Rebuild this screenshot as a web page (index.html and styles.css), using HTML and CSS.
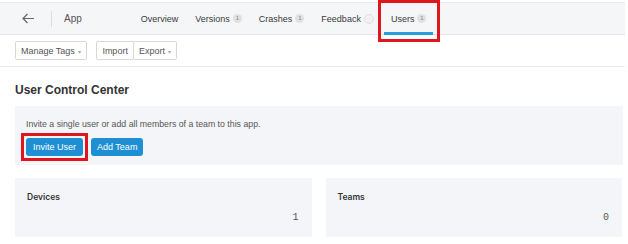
FILE: index.html
```html
<!DOCTYPE html>
<html lang="en">
<head>
    <meta charset="UTF-8">
    <title>App - Users</title>
    <link rel="stylesheet" href="styles.css">
</head>
<body>
    <div class="page">
        <header class="topbar">
            <a class="back" href="#">
                <svg width="13" height="11" viewBox="0 0 13 11"><path d="M12 5.5H1.5M5.5 1L1 5.5L5.5 10" fill="none" stroke="#666" stroke-width="1.2"/></svg>
            </a>
            <span class="sep"></span>
            <span class="app-name">App</span>
            <nav class="tabs">
                <a class="tab" href="#">Overview</a>
                <a class="tab" href="#">Versions <span class="badge">1</span></a>
                <a class="tab" href="#">Crashes <span class="badge">1</span></a>
                <a class="tab" href="#">Feedback <span class="badge empty"></span></a>
                <a class="tab active" href="#">Users <span class="badge">1</span><span class="mark"></span></a>
            </nav>
        </header>

        <div class="toolbar">
            <button class="tool">Manage Tags <span class="caret">&#9662;</span></button>
            <div class="tool-group">
                <button class="tool">Import</button>
                <button class="tool">Export <span class="caret">&#9662;</span></button>
            </div>
        </div>

        <h2 class="title">User Control Center</h2>

        <div class="invite-panel">
            <p>Invite a single user or add all members of a team to this app.</p>
            <div class="actions">
                <button class="btn marked">Invite User</button>
                <button class="btn">Add Team</button>
            </div>
        </div>

        <div class="stats">
            <div class="stat">
                <div class="stat-label">Devices</div>
                <div class="stat-value">1</div>
            </div>
            <div class="stat">
                <div class="stat-label">Teams</div>
                <div class="stat-value">0</div>
            </div>
        </div>
    </div>
</body>
</html>
```

FILE: styles.css
```css
:root {
    --bar: #f5f6f8;
    --panel: #f4f5f9;
    --line: #e3e4e7;
    --text: #444;
    --blue: #1f8fd3;
    --red: #e0161f;
}

body {
    margin: 0;
    background: #fff;
    font-family: 'Liberation Sans', Arial, sans-serif;
    color: var(--text);
}

.page {
    width: 625px;
    padding-top: 2px;
}

.topbar {
    display: flex;
    align-items: center;
    height: 31px;
    background: var(--bar);
    border-top: 1px solid #ebebeb;
    border-bottom: 1px solid var(--line);
}

.back {
    display: flex;
    margin-left: 22px;
}

.sep {
    width: 1px;
    height: 16px;
    background: #dcdcdc;
    margin-left: 16px;
}

.app-name {
    margin-left: 12px;
    font-size: 10px;
    color: #555;
}

.tabs {
    display: flex;
    height: 100%;
    margin-left: 52px;
    gap: 3px;
}

.tab {
    position: relative;
    display: flex;
    align-items: center;
    padding: 0 7px;
    font-size: 9px;
    color: #3a3a3a;
    text-decoration: none;
}

.badge {
    display: inline-block;
    width: 9px;
    height: 9px;
    margin-left: 3px;
    border-radius: 50%;
    background: #e1e1e1;
    color: #888;
    font-size: 6px;
    line-height: 9px;
    text-align: center;
}

.badge.empty {
    background: #f1f1f1;
    border: 1px solid #e0e0e0;
    width: 8px;
    height: 8px;
}

.tab.active .mark {
    position: absolute;
    left: 0;
    right: 0;
    bottom: -1px;
    height: 3px;
    background: #2a9fd6;
}

.tab.active::after {
    content: '';
    position: absolute;
    left: -6px;
    right: -7px;
    top: -3px;
    bottom: -8px;
    border: 3px solid var(--red);
}

.toolbar {
    display: flex;
    align-items: center;
    gap: 9px;
    height: 31px;
    padding-left: 15px;
    border-bottom: 1px solid #ebebeb;
}

.tool {
    height: 19px;
    padding: 0 5px;
    background: #fff;
    border: 1px solid #d8d8d8;
    border-radius: 2px;
    font-family: inherit;
    font-size: 9px;
    color: #555;
}

.tool-group {
    display: flex;
}

.tool-group .tool + .tool {
    margin-left: -1px;
}

.caret {
    margin-left: 1px;
    font-size: 6px;
    color: #aaa;
}

.title {
    margin: 16px 0 0 15px;
    font-size: 12px;
    font-weight: bold;
    color: #333;
}

.invite-panel {
    margin: 9px 2px 0 15px;
    padding: 13px 11px 9px;
    background: var(--panel);
}

.invite-panel p {
    margin: 0 0 9px;
    font-size: 8.75px;
    color: #555;
}

.actions {
    display: flex;
    gap: 8px;
}

.btn {
    height: 18px;
    padding: 0 6px;
    background: var(--blue);
    border: none;
    border-radius: 3px;
    font-family: inherit;
    font-size: 9px;
    color: #fff;
}

.btn.marked {
    position: relative;
    padding: 0 7px;
}

.btn.marked::after {
    content: '';
    position: absolute;
    inset: -5px;
    border: 3px solid var(--red);
}

.stats {
    display: flex;
    gap: 14px;
    margin: 13px 3px 0 15px;
}

.stat {
    flex: 1;
    height: 59px;
    padding: 14px 13px 0 12px;
    box-sizing: border-box;
    background: var(--panel);
}

.stat-label {
    font-family: Inter, sans-serif;
    font-size: 8.5px;
    font-weight: 600;
    color: #333;
}

.stat-value {
    margin-top: 10px;
    text-align: right;
    font-family: 'Liberation Mono', monospace;
    font-size: 10px;
    color: #555;
}
```
